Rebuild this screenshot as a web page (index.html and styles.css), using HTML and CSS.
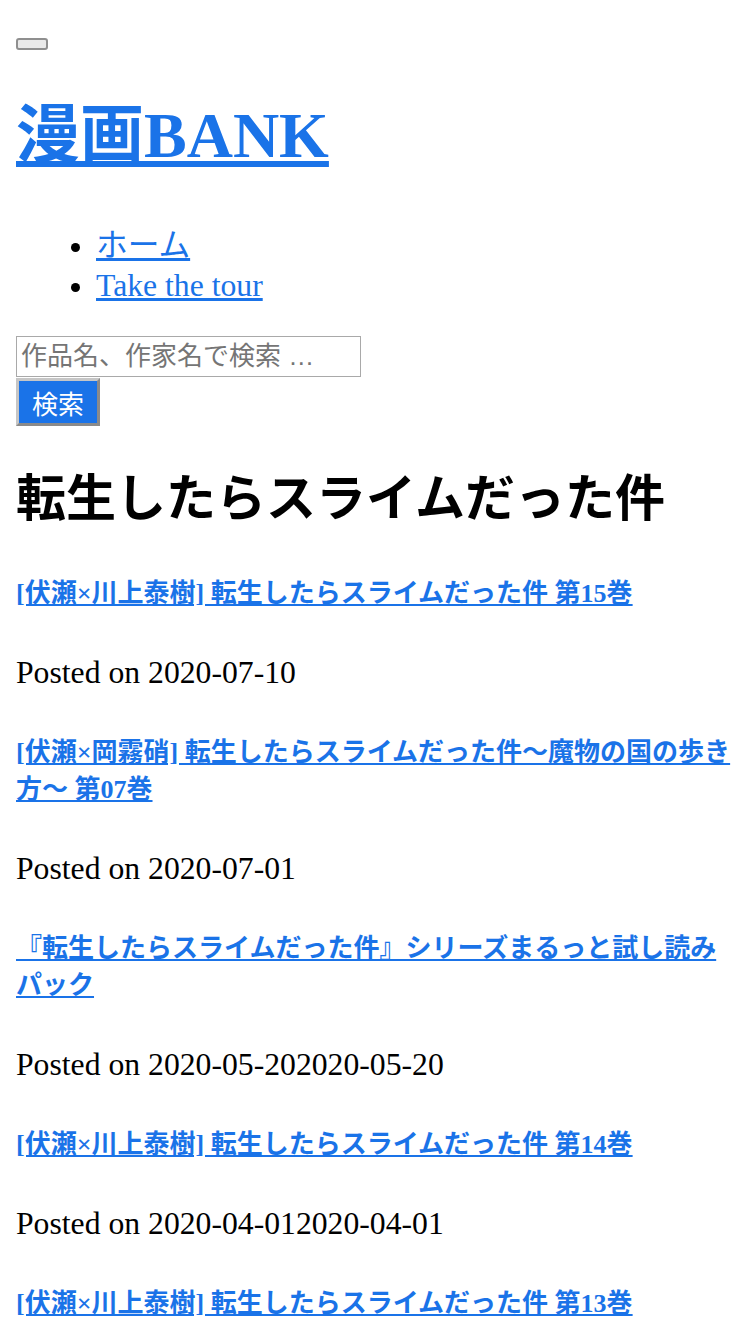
FILE: index.html
```html
<!DOCTYPE html>
<html lang="ja">
  <head>
    <meta charset="utf-8">
    <title>転生したらスライムだった件 - 漫画BANK</title>
    <link rel="stylesheet" href="styles.css">
  </head>
  <body>
    <header class="site-header">
      <button class="menu-toggle" type="button"></button>
      <h1 class="site-title"><a href="#">漫画BANK</a></h1>
      <nav class="site-nav">
        <ul>
          <li><a href="#">ホーム</a></li>
          <li><a href="#">Take the tour</a></li>
        </ul>
      </nav>
      <form class="search-form">
        <input type="search" class="search-field" placeholder="作品名、作家名で検索 …">
        <button type="submit" class="search-submit">検索</button>
      </form>
    </header>

    <main class="content">
      <h2 class="page-title">転生したらスライムだった件</h2>

      <article class="post">
        <h3 class="post-title"><a href="#">[伏瀬×川上泰樹] 転生したらスライムだった件 第15巻</a></h3>
        <p class="post-meta">Posted on 2020-07-10</p>
      </article>

      <article class="post">
        <h3 class="post-title"><a href="#">[伏瀬×岡霧硝] 転生したらスライムだった件～魔物の国の歩き方～ 第07巻</a></h3>
        <p class="post-meta">Posted on 2020-07-01</p>
      </article>

      <article class="post">
        <h3 class="post-title"><a href="#">『転生したらスライムだった件』シリーズまるっと試し読みパック</a></h3>
        <p class="post-meta">Posted on 2020-05-202020-05-20</p>
      </article>

      <article class="post">
        <h3 class="post-title"><a href="#">[伏瀬×川上泰樹] 転生したらスライムだった件 第14巻</a></h3>
        <p class="post-meta">Posted on 2020-04-012020-04-01</p>
      </article>

      <article class="post">
        <h3 class="post-title"><a href="#">[伏瀬×川上泰樹] 転生したらスライムだった件 第13巻</a></h3>
        <p class="post-meta">Posted on 2020-03-012020-03-01</p>
      </article>
    </main>
  </body>
</html>
```

FILE: styles.css
```css
body {
  margin: 16px;
  font-family: "Liberation Serif", "Noto Sans CJK JP", serif;
  font-size: 31.7px;
  color: #000;
}
a {
  color: #1a73e8;
}
.menu-toggle {
  display: block;
  width: 32px;
  height: 12px;
  margin-top: 22px;
  padding: 0;
  background: #e9e9e9;
  border: 2px solid #8f8f8f;
  border-radius: 3px;
}
.site-title {
  font-size: 64px;
  margin: 33px 0 51px;
}
.site-nav ul {
  margin: 0 0 30px;
  padding-left: 80px;
}
.site-nav li {
  line-height: 40px;
}
.search-field {
  display: block;
  width: 345px;
  height: 41px;
  margin: 0;
  padding: 2px 4px;
  box-sizing: border-box;
  border: 1px solid #a9a9a9;
  font-family: "Liberation Sans", "Noto Sans CJK JP", sans-serif;
  font-size: 26px;
}
.search-field::placeholder {
  color: #757575;
}
.search-submit {
  display: block;
  height: 48px;
  margin: 1px 0 0;
  padding: 0 13px;
  background: #1a73e8;
  color: #fff;
  border: 3px solid;
  border-color: #c6c6c6 #8a8a8a #8a8a8a #c6c6c6;
  font-family: "Liberation Sans", "Noto Sans CJK JP", sans-serif;
  font-size: 26px;
}
.page-title {
  font-size: 50px;
  margin: 32px 0 42px;
}
.post-title {
  font-size: 26px;
  margin: 0;
}
.post-meta {
  margin: 46px 0 40px;
}
```
